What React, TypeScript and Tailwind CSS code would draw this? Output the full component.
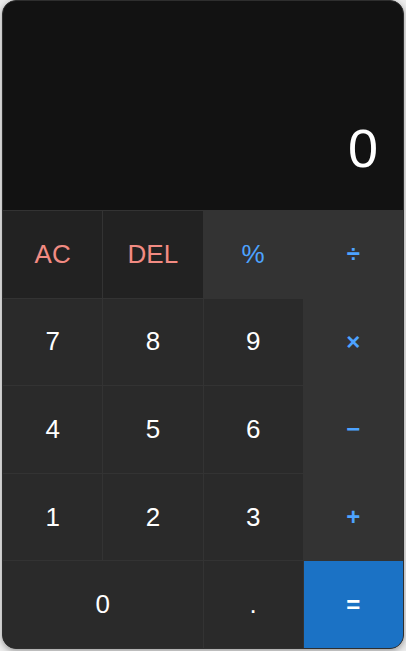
import React from "react";

type Key = {
  label: string;
  kind: "fn" | "num" | "op" | "eq" | "pct";
  wide?: boolean;
};

const keys: Key[] = [
  { label: "AC", kind: "fn" },
  { label: "DEL", kind: "fn" },
  { label: "%", kind: "pct" },
  { label: "÷", kind: "op" },
  { label: "7", kind: "num" },
  { label: "8", kind: "num" },
  { label: "9", kind: "num" },
  { label: "×", kind: "op" },
  { label: "4", kind: "num" },
  { label: "5", kind: "num" },
  { label: "6", kind: "num" },
  { label: "−", kind: "op" },
  { label: "1", kind: "num" },
  { label: "2", kind: "num" },
  { label: "3", kind: "num" },
  { label: "+", kind: "op" },
  { label: "0", kind: "num", wide: true },
  { label: ".", kind: "num" },
  { label: "=", kind: "eq" },
];

const styles: Record<Key["kind"], string> = {
  fn: "bg-[#222222] text-[#f28b82] text-[26px]",
  num: "bg-[#2a2a2a] text-white text-[26px]",
  pct: "bg-[#333333] text-[#4da3ff] text-[26px]",
  op: "bg-[#333333] text-[#4da3ff] text-[24px] font-bold",
  eq: "bg-[#1b72c5] text-white text-[24px] font-bold",
};

export default function App() {
  return (
    <div className="min-h-screen bg-[#ececec] px-[2px] font-['Liberation_Sans',Arial,sans-serif]">
      <div className="h-[649px] flex flex-col overflow-hidden rounded-[14px] border border-[#2e2e2e] bg-[#121212] shadow-[0_2px_6px_rgba(0,0,0,0.35)]">
        {/* Display */}
        <div className="h-[209px] flex items-end justify-end pr-[25px] pb-[35px]">
          <span className="text-[54px] leading-none text-white">0</span>
        </div>

        {/* Keypad */}
        <div className="flex-1 grid grid-cols-4 grid-rows-5 gap-px pt-px bg-[#333333]">
          {keys.map((k) => (
            <button
              key={k.label}
              className={`flex items-center justify-center ${styles[k.kind]} ${k.wide ? "col-span-2" : ""}`}
            >
              {k.label}
            </button>
          ))}
        </div>
      </div>
    </div>
  );
}
